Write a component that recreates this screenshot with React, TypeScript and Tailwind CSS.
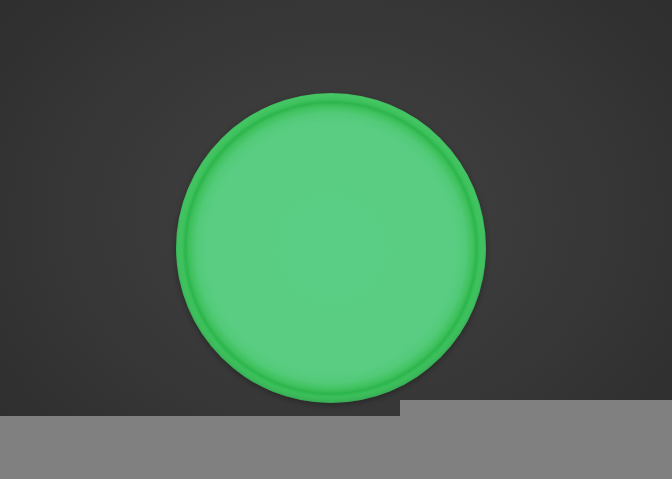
import React from 'react';

export default function App() {
  return (
    <div className="w-[672px] h-[479px] flex flex-col overflow-hidden bg-[radial-gradient(ellipse_at_50%_45%,#424242_0%,#393939_45%,#2c2c2c_100%)]">
      {/* Stage */}
      <div className="h-[400px] pt-[93px] pl-[176px]">
        <div className="w-[310px] h-[310px] rounded-full shadow-[0_2px_6px_rgba(0,0,0,0.3),inset_0_-3px_4px_rgba(20,120,45,0.3)] bg-[radial-gradient(circle_closest-side,#5bce85_0%,#5acd83_80%,#52ca78_87%,#40c25e_91.5%,#2db54d_94%,#3cc15b_96%,#46c666_99%,#3fbf5c_100%)]" />
      </div>

      {/* Bottom bars */}
      <div className="h-4 flex justify-end">
        <div className="w-[272px] h-full bg-[#808080]" />
      </div>
      <div className="h-[63px] bg-[#808080]" />
    </div>
  );
}
